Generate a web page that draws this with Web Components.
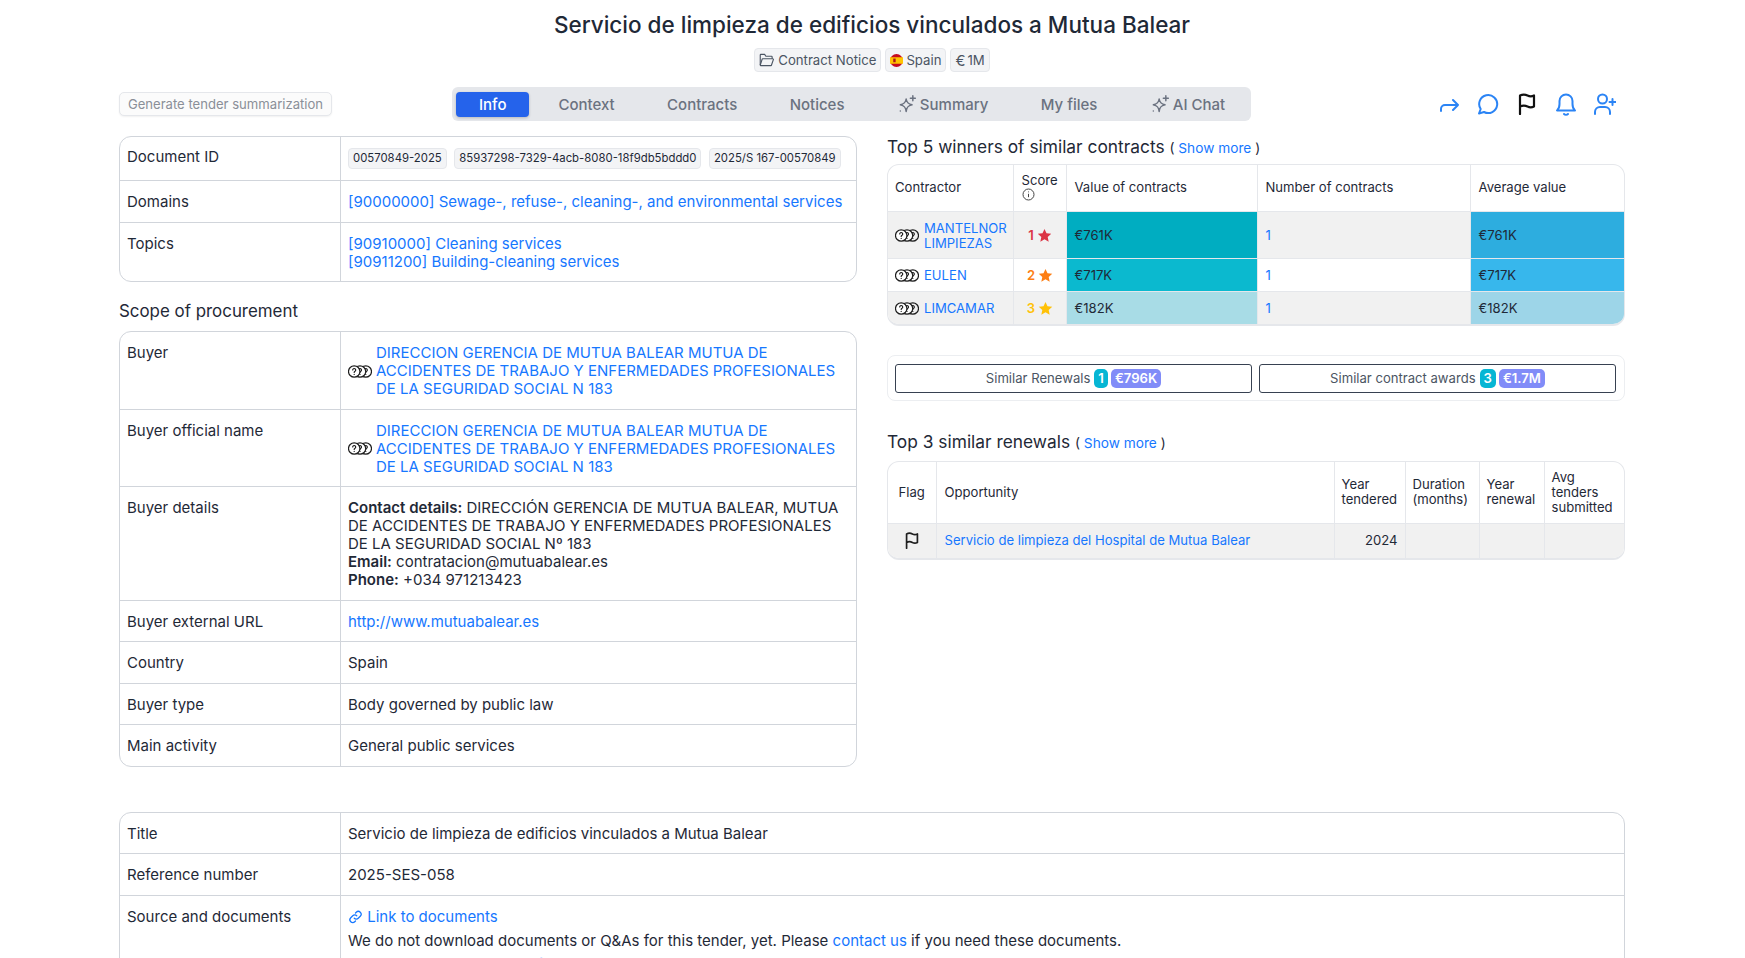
<!DOCTYPE html>
<html lang="en">
<head>
<meta charset="utf-8">
<title>Servicio de limpieza</title>
<style>
  html, body { margin: 0; background: #fff; }
  body { font-family: Inter, "Noto Sans", sans-serif; color: #1f2937; font-size: 15px; }
  a { color: #1677ff; text-decoration: none; }
</style>
</head>
<body>
<tender-page>
  <tender-header title-text="Servicio de limpieza de edificios vinculados a Mutua Balear"></tender-header>
  <tender-toolbar></tender-toolbar>
  <two-cols>
    <div slot="left">
      <info-table>
        <info-row label="Document ID" tight>
          <mono-chip>00570849-2025</mono-chip><mono-chip>85937298-7329-4acb-8080-18f9db5bddd0</mono-chip><mono-chip>2025/S 167-00570849</mono-chip>
        </info-row>
        <info-row label="Domains"><a href="#">[90000000] Sewage-, refuse-, cleaning-, and environmental services</a></info-row>
        <info-row label="Topics" last><a href="#">[90910000] Cleaning services</a><br><a href="#">[90911200] Building-cleaning services</a></info-row>
      </info-table>
      <section-title>Scope of procurement</section-title>
      <info-table>
        <info-row label="Buyer"><buyer-link>DIRECCION GERENCIA DE MUTUA BALEAR MUTUA DE ACCIDENTES DE TRABAJO Y ENFERMEDADES PROFESIONALES DE LA SEGURIDAD SOCIAL N 183</buyer-link></info-row>
        <info-row label="Buyer official name"><buyer-link>DIRECCION GERENCIA DE MUTUA BALEAR MUTUA DE ACCIDENTES DE TRABAJO Y ENFERMEDADES PROFESIONALES DE LA SEGURIDAD SOCIAL N 183</buyer-link></info-row>
        <info-row label="Buyer details"><b style="font-weight:600">Contact details:</b> DIRECCIÓN GERENCIA DE MUTUA BALEAR, MUTUA DE ACCIDENTES DE TRABAJO Y ENFERMEDADES PROFESIONALES DE LA SEGURIDAD SOCIAL Nº 183<br><b style="font-weight:600">Email:</b> contratacion@mutuabalear.es<br><b style="font-weight:600">Phone:</b> +034 971213423</info-row>
        <info-row label="Buyer external URL"><a href="#">http://www.mutuabalear.es</a></info-row>
        <info-row label="Country">Spain</info-row>
        <info-row label="Buyer type">Body governed by public law</info-row>
        <info-row label="Main activity" last>General public services</info-row>
      </info-table>
    </div>
    <div slot="right">
      <section-title compact more>Top 5 winners of similar contracts</section-title>
      <winners-table></winners-table>
      <similar-panel></similar-panel>
      <section-title compact more style="margin-bottom:7px">Top 3 similar renewals</section-title>
      <renewals-table></renewals-table>
    </div>
  </two-cols>
  <info-table style="margin-top:45px">
    <info-row label="Title">Servicio de limpieza de edificios vinculados a Mutua Balear</info-row>
    <info-row label="Reference number">2025-SES-058</info-row>
    <info-row label="Source and documents" last>
      <a href="#"><svg width="15" height="16" viewBox="0 0 24 24" fill="none" stroke="currentColor" stroke-width="2" stroke-linecap="round" stroke-linejoin="round" style="vertical-align:-3px"><path d="M10 14a4.5 4.5 0 0 0 6.4 0l3.2-3.2a4.5 4.5 0 0 0-6.4-6.4l-1.2 1.2"/><path d="M14 10a4.5 4.5 0 0 0-6.4 0l-3.2 3.2a4.5 4.5 0 0 0 6.4 6.4l1.2-1.2"/></svg> Link to documents</a>
      <div style="margin-top:6px">We do not download documents or Q&amp;As for this tender, yet. Please <a href="#">contact us</a> if you need these documents.</div>
      <div style="margin-top:6px">Upload and manage in <a href="#">my files</a></div>
    </info-row>
  </info-table>
</tender-page>

<script>
const ICONS = {
  sparkle: `<svg width="20" height="20" viewBox="0 0 24 24" fill="none" stroke="currentColor" stroke-width="1.8" stroke-linejoin="round" stroke-linecap="round"><path d="M11 6c.6 4.200 2.200 6 7 7-4.800 1-6.400 2.800-7 8-.6-5.200-2.200-7-7-8 4.800-1 6.400-2.800 7-7z"/><path d="M19 2v6M16 5h6"/><path d="M4 20.500v.01"/></svg>`,
  coins: `<svg width="24" height="13" viewBox="0 0 24 13" fill="none" stroke="#1f1f1f" stroke-width="1.200" style="display:block;flex:none"><circle cx="17.800" cy="6.500" r="5.700"/><path d="M16.300 5a1.500 1.500 0 1 1 2.300 1.300c-.5.300-.8.600-.8 1.200M17.800 9.300v.2" stroke-linecap="round"/><circle cx="12" cy="6.500" r="5.700" fill="#fff"/><path d="M10.500 5a1.500 1.500 0 1 1 2.300 1.300c-.5.300-.8.600-.8 1.200M12 9.300v.2" stroke-linecap="round"/><circle cx="6.200" cy="6.500" r="5.700" fill="#fff"/><path d="M4.700 5a1.500 1.500 0 1 1 2.300 1.300c-.5.300-.8.600-.8 1.200M6.200 9.300v.2" stroke-linecap="round"/></svg>`,
  flag: `<svg width="18" height="22" viewBox="0 0 18 22" fill="none" stroke="currentColor" stroke-width="2.200" stroke-linecap="round" stroke-linejoin="round"><path d="M2 21V2.500c3-1.500 5.500-1 7.500 0s4.500 1 6.500 0v11c-2 1-4.500 1-6.500 0s-4.500-1.500-7.500 0"/></svg>`,
  star: `<svg width="15" height="15" viewBox="0 0 24 24" fill="currentColor"><path d="M12 1.500l3.200 7 7.600.8-5.700 5.100 1.600 7.600L12 18.100 5.300 22l1.600-7.600L1.200 9.300l7.600-.8z"/></svg>`
};

class TenderPage extends HTMLElement {
  constructor() {
    super();
    this.attachShadow({ mode: 'open' });
    this.shadowRoot.innerHTML = `
      <style>
        :host { display: block; padding: 0 120px 0 119px; height: 958px; overflow: hidden; box-sizing: border-box; }
      </style>
      <slot></slot>`;
  }
}

class TenderHeader extends HTMLElement {
  constructor() {
    super();
    this.attachShadow({ mode: 'open' });
    this.shadowRoot.innerHTML = `
      <style>
        :host { display: block; text-align: center; padding-top: 10px; }
        h1 { margin: 0; font-size: 22.500px; line-height: 30px; font-weight: 500; color: #1f2937; }
        .badges { display: flex; justify-content: center; gap: 4px; margin-top: 8px; }
        .badge { display: flex; align-items: center; gap: 4px; height: 24px; padding: 0 4px; box-sizing: border-box;
          background: #f3f4f6; border: 1px solid #e5e7eb; border-radius: 4px; font-size: 13.200px; color: #4b5563; }
        .flagicon { margin-right: -1px; }
        .eur { font-size: 15px; margin-right: -2px; }
      </style>
      <h1>${this.getAttribute('title-text')}</h1>
      <div class="badges">
        <span class="badge"><svg width="15" height="14" viewBox="0 0 24 22" fill="none" stroke="currentColor" stroke-width="1.800" stroke-linejoin="round"><path d="M2 19V3a1 1 0 0 1 1-1h6l2 3h9a1 1 0 0 1 1 1v3"/><path d="M2 19l3-9a1 1 0 0 1 1-1h16a1 1 0 0 1 1 1.300L20 19a1 1 0 0 1-1 1H3a1 1 0 0 1-1-1z"/></svg>Contract Notice</span>
        <span class="badge"><svg class="flagicon" width="13" height="13" viewBox="0 0 12 12"><circle cx="6" cy="6" r="6" fill="#c60b1e"/><path d="M.3 4.500h11.400v3H.3z M0 3h12v6H0z" fill="#ffc400"/><rect x="3" y="4.200" width="2.200" height="3.400" fill="#ad1519"/></svg>Spain</span>
        <span class="badge"><span class="eur">€</span>1M</span>
      </div>`;
  }
}

class TenderToolbar extends HTMLElement {
  constructor() {
    super();
    this.attachShadow({ mode: 'open' });
    const tabs = [['Info'], ['Context'], ['Contracts'], ['Notices'], ['Summary', 1], ['My files'], ['AI Chat', 1]];
    this.shadowRoot.innerHTML = `
      <style>
        :host { display: flex; justify-content: space-between; align-items: center; margin-top: 15px; height: 34px; }
        .gen { width: 213px; height: 24px; box-sizing: border-box; border: 1px solid #e5e7eb; border-radius: 5px; background: #fbfbfb;
          color: #8a8f98; font-size: 13.100px; display: flex; align-items: center; justify-content: center; box-shadow: 0 1px 2px rgba(0,0,0,.06); }
        .tabs { display: flex; align-items: center; height: 34px; width: 799px; box-sizing: border-box; background: #e5e7eb; border-radius: 6px; padding: 0 4px; }
        .tab { display: flex; align-items: center; gap: 3px; height: 25px; padding: 0 26.200px; font-size: 15px; color: #6b7280; font-weight: 500; white-space: nowrap; }
        .tab.on { background: #2563eb; color: #fff; border-radius: 4px; box-shadow: 0 1px 3px rgba(0,0,0,.2); padding: 0 23px; }
        .tab:nth-child(2) { padding-left: 29px; }
        .icons { width: 254px; box-sizing: border-box; display: flex; justify-content: flex-end; align-items: center; gap: 18px; padding-right: 9px; color: #2b84f5; }
        svg { display: block; }
        .flag { color: #111; margin-left: 1px; }
        .bell { margin-left: 1px; margin-right: -1px; }
      </style>
      <div class="gen">Generate tender summarization</div>
      <div class="tabs">
        ${tabs.map((t, i) => `<div class="tab${i === 0 ? ' on' : ''}">${t[1] ? ICONS.sparkle : ''}${t[0]}</div>`).join('')}
      </div>
      <div class="icons">
        <svg width="19" height="22" viewBox="0 0 19 22" fill="none" stroke="currentColor" stroke-width="2" stroke-linecap="round" stroke-linejoin="round"><path d="M1 18v-2a4 4 0 0 1 4-4h13M13 7l5 5-5 5"/></svg>
        <svg width="22" height="22" viewBox="0 0 21 22" fill="none" stroke="currentColor" stroke-width="2" stroke-linecap="round" stroke-linejoin="round"><path d="M1.500 20.500l1.700-4.500A9 9 0 1 1 6.500 19z"/></svg>
        <span class="flag">${ICONS.flag}</span>
        <svg class="bell" width="22" height="23" viewBox="0 0 20 23" fill="none" stroke="currentColor" stroke-width="2" stroke-linecap="round" stroke-linejoin="round"><path d="M1 17.500h18c-2-1.500-2.500-3-2.500-6.500V8a6.500 6.500 0 0 0-13 0v3c0 3.500-.5 5-2.500 6.500zM8 21c1 1 3 1 4 0"/></svg>
        <svg width="22" height="22" viewBox="0 0 22 22" fill="none" stroke="currentColor" stroke-width="2" stroke-linecap="round" stroke-linejoin="round"><circle cx="8.500" cy="6" r="4.500"/><path d="M1 21v-2a5 5 0 0 1 5-5h5a5 5 0 0 1 5 5v2M15.500 9h6M18.500 6v6"/></svg>
      </div>`;
  }
}

class TwoCols extends HTMLElement {
  constructor() {
    super();
    this.attachShadow({ mode: 'open' });
    this.shadowRoot.innerHTML = `
      <style>
        :host { display: grid; grid-template-columns: 738px 738px; column-gap: 30px; margin-top: 15px; }
      </style>
      <slot name="left"></slot><slot name="right"></slot>`;
  }
}

class InfoTable extends HTMLElement {
  constructor() {
    super();
    this.attachShadow({ mode: 'open' });
    this.shadowRoot.innerHTML = `
      <style>
        :host { display: block; border: 1px solid #d1d5db; border-radius: 12px; overflow: hidden; }
      </style>
      <slot></slot>`;
  }
}

class InfoRow extends HTMLElement {
  constructor() {
    super();
    this.attachShadow({ mode: 'open' });
    const tight = this.hasAttribute('tight');
    this.shadowRoot.innerHTML = `
      <style>
        :host { display: grid; grid-template-columns: 221px 1fr; border-bottom: 1px solid #d1d5db; font-size: 15px; line-height: 18px; color: #1f2937; }
        :host([last]) { border-bottom: 0; }
        .label { padding: ${tight ? '11.250px' : '12px'} 7px ${tight ? '11.250px' : '10.500px'}; border-right: 1px solid #d1d5db; }
        .value { padding: ${tight ? '11px 0 11px 7px' : '12px 7px 10.500px'}; min-width: 0; ${tight ? 'display: flex; align-items: center;' : ''} }
      </style>
      <div class="label">${this.getAttribute('label')}</div>
      <div class="value"><slot></slot></div>`;
  }
}

class MonoChip extends HTMLElement {
  constructor() {
    super();
    this.attachShadow({ mode: 'open' });
    this.shadowRoot.innerHTML = `
      <style>
        :host { display: inline-block; font-size: 11.350px; line-height: 19px; padding: 0 4px; margin-right: 7.500px; background: #f3f4f6;
          border: 1px solid #e5e7eb; border-radius: 4px; color: #1f2937; white-space: nowrap; }
      </style>
      <slot></slot>`;
  }
}

class BuyerLink extends HTMLElement {
  constructor() {
    super();
    this.attachShadow({ mode: 'open' });
    this.shadowRoot.innerHTML = `
      <style>
        :host { display: flex; align-items: center; gap: 4px; color: #1677ff; }
        .ico { flex: none; width: 24px; }
      </style>
      <span class="ico">${ICONS.coins}</span><span><slot></slot></span>`;
  }
}

class SectionTitle extends HTMLElement {
  constructor() {
    super();
    this.attachShadow({ mode: 'open' });
    const compact = this.hasAttribute('compact');
    this.shadowRoot.innerHTML = `
      <style>
        :host { display: block; font-size: ${compact ? '17.350px' : '16.900px'}; line-height: 22px; font-weight: 400; color: #1f2937; margin: ${compact ? '0 0 5px' : '17.500px 0 9.500px'}; }
        .more { font-size: 13.700px; }
        a { color: #1677ff; text-decoration: none; }
      </style>
      <slot></slot>${this.hasAttribute('more') ? ' <span class="more">( <a href="#">Show more</a> )</span>' : ''}`;
  }
}

const TABLE_CSS = `
  :host { display: block; border: 1px solid #e5e7eb; border-radius: 12px; overflow: hidden; border-bottom-width: 2px; }
  table { width: 100%; border-collapse: collapse; table-layout: fixed; font-size: 13.100px; line-height: 15px; color: #1f2937; }
  th { font-weight: 400; text-align: left; padding: 7px 7px; border: 1px solid #e5e7eb; border-top: 0; }
  td { padding: 7px 7px; border: 1px solid #e5e7eb; }
  tr > :first-child { border-left: 0; } tr > :last-child { border-right: 0; }
  tr:last-child td { border-bottom: 0; }
  .grey td { background: #f1f1f1; }
  a { color: #1677ff; text-decoration: none; }
`;

class WinnersTable extends HTMLElement {
  constructor() {
    super();
    this.attachShadow({ mode: 'open' });
    const rows = [
      ['MANTELNOR<br>LIMPIEZAS', 1, '#dc3545', '€761K', '#00adc1', '#2daddf'],
      ['EULEN', 2, '#fd7e14', '€717K', '#0bb9cf', '#37b7ec'],
      ['LIMCAMAR', 3, '#ffc107', '€182K', '#a8dce6', '#9dd5e8']
    ];
    this.shadowRoot.innerHTML = `
      <style>${TABLE_CSS}
        td { padding: 8px 7px 6px; }
        tr > :nth-child(n+2) { padding-left: 8px; }
        .con { display: flex; align-items: center; gap: 5px; }
        .score { display: flex; justify-content: center; align-items: center; gap: 3px; font-weight: 600; }
        .score svg { display: block; }
        tr.r1 td { height: 32px; } tr.r2 td, tr.r3 td { height: 18px; }
      </style>
      <table>
        <colgroup><col style="width:125px"><col style="width:53px"><col style="width:191px"><col style="width:213px"><col></colgroup>
        <tr style="height:46px"><th>Contractor</th><th>Score<br><svg width="13" height="13" viewBox="0 0 13 13" fill="none" stroke="#444" style="vertical-align:-1px"><circle cx="6.500" cy="6.500" r="5.500"/><path d="M6.500 5.800v3.400M6.500 3.500v.8"/></svg></th><th>Value of contracts</th><th>Number of contracts</th><th>Average value</th></tr>
        ${rows.map((r, i) => `<tr class="r${i + 1} ${i !== 1 ? 'grey' : ''}">
          <td><div class="con">${ICONS.coins}<a href="#">${r[0]}</a></div></td>
          <td><div class="score" style="color:${r[2]}">${r[1]}${ICONS.star}</div></td>
          <td style="background:${r[4]}">${r[3]}</td>
          <td><a href="#">1</a></td>
          <td style="background:${r[5]}">${r[3]}</td>
        </tr>`).join('')}
      </table>`;
  }
}

class SimilarPanel extends HTMLElement {
  constructor() {
    super();
    this.attachShadow({ mode: 'open' });
    const btn = (t, n, v) => `<div class="btn">${t} <span class="n">${n}</span><span class="v">${v}</span></div>`;
    this.shadowRoot.innerHTML = `
      <style>
        :host { display: flex; gap: 7px; height: 46px; box-sizing: border-box; padding: 8px 8px 8px 7px; margin: 29px 0 30px; border: 1px solid #eceef1; border-radius: 8px; }
        .btn { flex: 1; display: flex; align-items: center; justify-content: center; gap: 3px; height: 29px; box-sizing: border-box; border: 1px solid #374151; border-radius: 3px; font-size: 13.100px; color: #4b5563; }
        .n { background: #06b6d4; color: #fff; font-weight: 600; border-radius: 5px; padding: 0 4px; line-height: 19px; margin-left: 1px; }
        .v { background: #818cf8; color: #fff; font-weight: 600; border-radius: 5px; padding: 0 4px; line-height: 19px; }
      </style>
      ${btn('Similar Renewals', 1, '€796K')}${btn('Similar contract awards', 3, '€1.7M')}`;
  }
}

class RenewalsTable extends HTMLElement {
  constructor() {
    super();
    this.attachShadow({ mode: 'open' });
    this.shadowRoot.innerHTML = `
      <style>${TABLE_CSS}
        th { padding: 7px 7px; }
        td { padding: 7px 7px 7px; }
        tr > :nth-child(2) { padding-left: 8px; }
      </style>
      <table>
        <colgroup><col style="width:48px"><col><col style="width:71px"><col style="width:74px"><col style="width:65px"><col style="width:80px"></colgroup>
        <tr style="height:62px"><th style="text-align:center">Flag</th><th>Opportunity</th><th>Year tendered</th><th>Duration (months)</th><th>Year renewal</th><th>Avg tenders submitted</th></tr>
        <tr class="grey" style="height:34px">
          <td style="text-align:center;padding:0"><svg width="16" height="17" viewBox="0 0 18 22" fill="none" stroke="#1f1f1f" stroke-width="2.200" stroke-linecap="round" stroke-linejoin="round" style="display:block;margin:auto"><path d="M2 21V2.500c3-1.500 5.500-1 7.500 0s4.500 1 6.500 0v11c-2 1-4.500 1-6.500 0s-4.500-1.500-7.500 0"/></svg></td>
          <td><a href="#">Servicio de limpieza del Hospital de Mutua Balear</a></td>
          <td style="text-align:right">2024</td><td></td><td></td><td></td>
        </tr>
      </table>`;
  }
}

customElements.define('tender-page', TenderPage);
customElements.define('tender-header', TenderHeader);
customElements.define('tender-toolbar', TenderToolbar);
customElements.define('two-cols', TwoCols);
customElements.define('info-table', InfoTable);
customElements.define('info-row', InfoRow);
customElements.define('mono-chip', MonoChip);
customElements.define('buyer-link', BuyerLink);
customElements.define('section-title', SectionTitle);
customElements.define('winners-table', WinnersTable);
customElements.define('similar-panel', SimilarPanel);
customElements.define('renewals-table', RenewalsTable);
</script>
</body>
</html>
